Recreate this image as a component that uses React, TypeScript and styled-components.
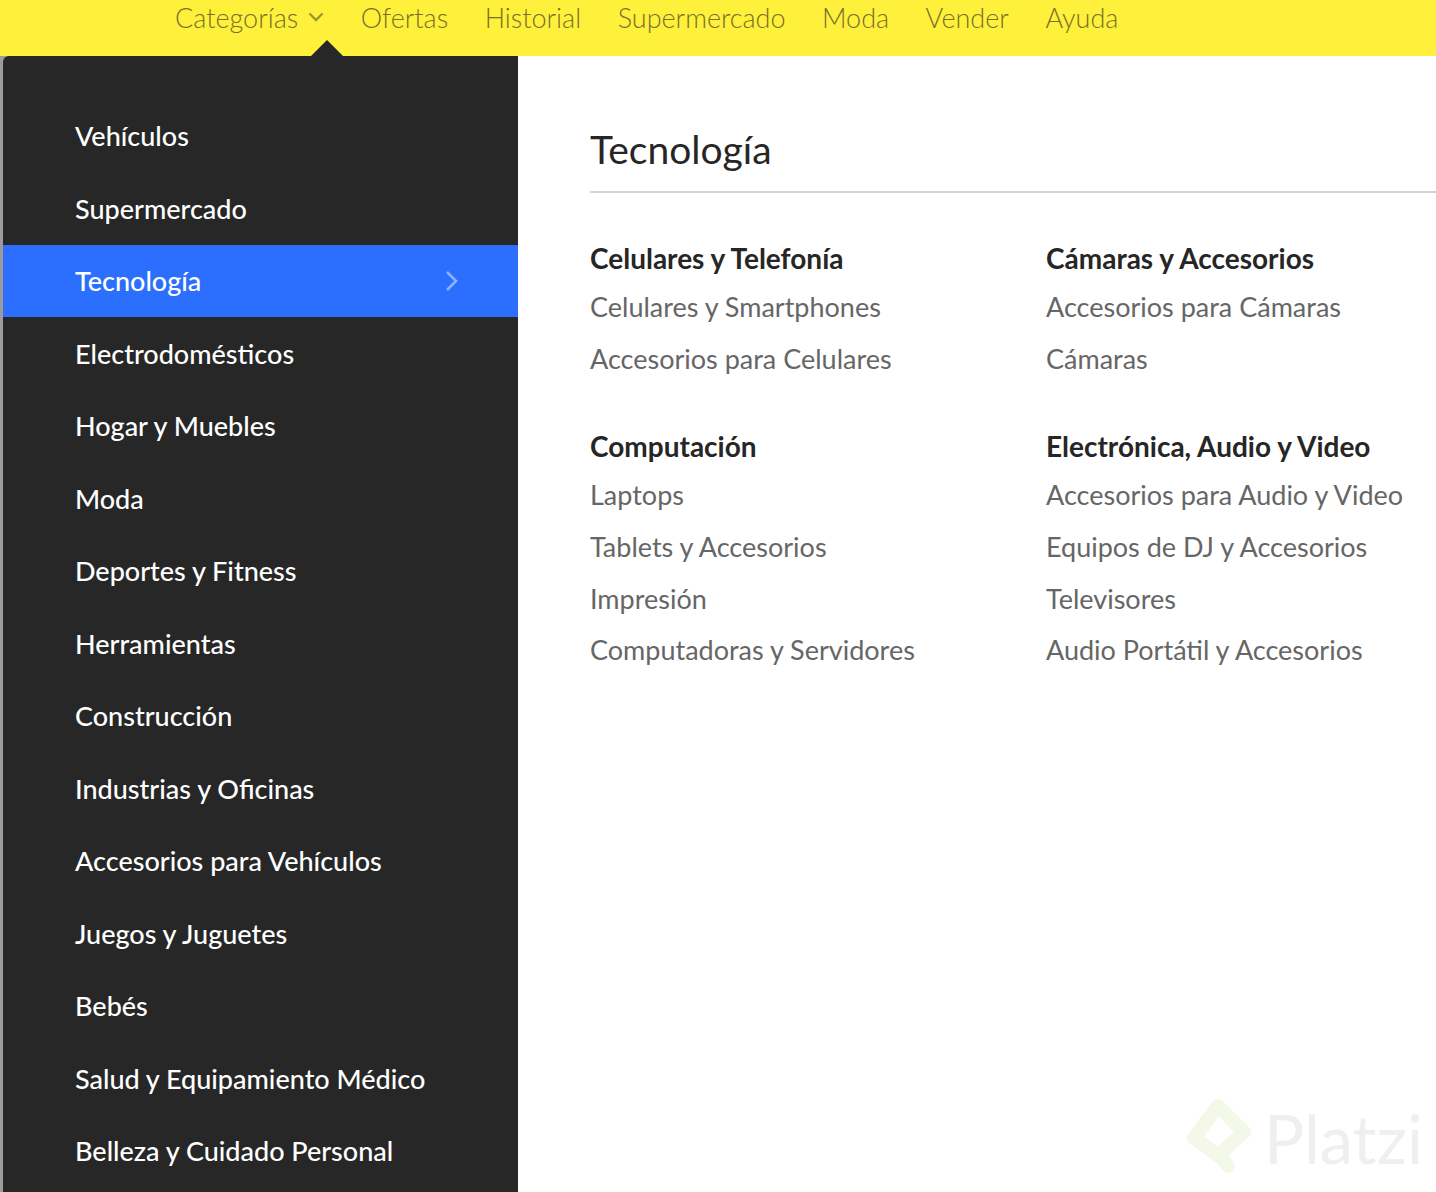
import React from 'react';
import styled, { createGlobalStyle } from 'styled-components';

const GlobalStyle = createGlobalStyle`
  html, body {
    margin: 0;
    padding: 0;
    background: #fff;
  }
  * {
    box-sizing: border-box;
  }
`;

const FONT = `Lato, "Open Sans", "Liberation Sans", sans-serif`;

const Page = styled.div`
  width: 1436px;
  height: 1192px;
  overflow: hidden;
  position: relative;
  font-family: ${FONT};
  background: #9b9b9b;
`;

const TopBar = styled.nav`
  height: 56px;
  background: #fff03b;
  display: flex;
  align-items: flex-start;
  gap: 36.5px;
  padding-left: 175px;
  position: relative;
`;

const NavLink = styled.a`
  display: flex;
  align-items: center;
  gap: 10px;
  height: 34px;
  font-size: 27px;
  font-weight: 300;
  color: #77702a;
  position: relative;
`;

const Caret = styled.div`
  position: absolute;
  left: 311px;
  top: 40px;
  width: 0;
  height: 0;
  border-left: 16px solid transparent;
  border-right: 16px solid transparent;
  border-bottom: 16px solid #272727;
`;

const Menu = styled.div`
  display: flex;
  margin-left: 3px;
  height: 1136px;
`;

const Sidebar = styled.ul`
  width: 515px;
  margin: 0;
  padding: 43.5px 0 0;
  list-style: none;
  background: #272727;
  border-top-left-radius: 6px;
`;

const SideItem = styled.li<{ $active?: boolean }>`
  height: 72.5px;
  display: flex;
  align-items: center;
  justify-content: space-between;
  padding: 0 59px 0 72px;
  font-size: 27px;
  font-weight: 500;
  color: #fff;
  background: ${(p) => (p.$active ? '#2c6fff' : 'transparent')};
`;

const Panel = styled.section`
  flex: 1;
  background: #fff;
  padding: 64px 0 0 72px;
  position: relative;
`;

const PanelTitle = styled.h2`
  margin: 0;
  height: 73px;
  font-size: 39px;
  line-height: 58px;
  font-weight: 400;
  color: #262626;
  border-bottom: 2px solid #d4d4d4;
`;

const Columns = styled.div`
  display: grid;
  grid-template-columns: 456px 1fr;
  row-gap: 39px;
  padding-top: 45px;
`;

const Group = styled.div`
  display: flex;
  flex-direction: column;
`;

const GroupTitle = styled.h3`
  margin: 0 0 6px;
  height: 40px;
  line-height: 40px;
  font-size: 28px;
  font-weight: 700;
  color: #262626;
`;

const GroupLink = styled.a`
  height: 51.7px;
  line-height: 46px;
  font-size: 27px;
  font-weight: 400;
  color: #666;
  white-space: nowrap;
`;

const Watermark = styled.div`
  position: absolute;
  right: 13px;
  bottom: 14px;
  display: flex;
  align-items: center;
  gap: 12px;
  font-size: 67px;
  line-height: 78px;
  color: #efefef;
`;

const nav = ['Ofertas', 'Historial', 'Supermercado', 'Moda', 'Vender', 'Ayuda'];

const sideItems = [
  'Vehículos',
  'Supermercado',
  'Tecnología',
  'Electrodomésticos',
  'Hogar y Muebles',
  'Moda',
  'Deportes y Fitness',
  'Herramientas',
  'Construcción',
  'Industrias y Oficinas',
  'Accesorios para Vehículos',
  'Juegos y Juguetes',
  'Bebés',
  'Salud y Equipamiento Médico',
  'Belleza y Cuidado Personal',
];

const groups = [
  {
    title: 'Celulares y Telefonía',
    links: ['Celulares y Smartphones', 'Accesorios para Celulares'],
  },
  {
    title: 'Cámaras y Accesorios',
    links: ['Accesorios para Cámaras', 'Cámaras'],
  },
  {
    title: 'Computación',
    links: ['Laptops', 'Tablets y Accesorios', 'Impresión', 'Computadoras y Servidores'],
  },
  {
    title: 'Electrónica, Audio y Video',
    links: [
      'Accesorios para Audio y Video',
      'Equipos de DJ y Accesorios',
      'Televisores',
      'Audio Portátil y Accesorios',
    ],
  },
];

const ChevronDown = () => (
  <svg width="16" height="10" viewBox="0 0 16 10" fill="none">
    <path d="M1.5 1.5 8 8l6.5-6.5" stroke="#9c9432" strokeWidth="2.4" />
  </svg>
);

const ChevronRight = () => (
  <svg width="14" height="22" viewBox="0 0 14 22" fill="none">
    <path d="M2 2l9 9-9 9" stroke="#8db3ff" strokeWidth="2.6" />
  </svg>
);

const PlatziLogo = () => (
  <svg width="68" height="80" viewBox="0 0 68 80" fill="none">
    <path
      d="M38 60 L10 40 L34 8 L60 34 L40 52"
      stroke="#f4f8e8"
      strokeWidth="14"
      strokeLinejoin="round"
      strokeLinecap="round"
    />
    <path d="M38 60 L44 68" stroke="#f4f8e8" strokeWidth="14" strokeLinecap="round" />
  </svg>
);

const App: React.FC = () => {
  return (
    <Page>
      <GlobalStyle />
      <TopBar>
        <NavLink>
          Categorías
          <ChevronDown />
        </NavLink>
        {nav.map((item) => (
          <NavLink key={item}>{item}</NavLink>
        ))}
        <Caret />
      </TopBar>
      <Menu>
        <Sidebar>
          {sideItems.map((item) => (
            <SideItem key={item} $active={item === 'Tecnología'}>
              {item}
              {item === 'Tecnología' && <ChevronRight />}
            </SideItem>
          ))}
        </Sidebar>
        <Panel>
          <PanelTitle>Tecnología</PanelTitle>
          <Columns>
            {groups.map((group) => (
              <Group key={group.title}>
                <GroupTitle>{group.title}</GroupTitle>
                {group.links.map((link) => (
                  <GroupLink key={link}>{link}</GroupLink>
                ))}
              </Group>
            ))}
          </Columns>
          <Watermark>
            <PlatziLogo />
            Platzi
          </Watermark>
        </Panel>
      </Menu>
    </Page>
  );
};

export default App;
